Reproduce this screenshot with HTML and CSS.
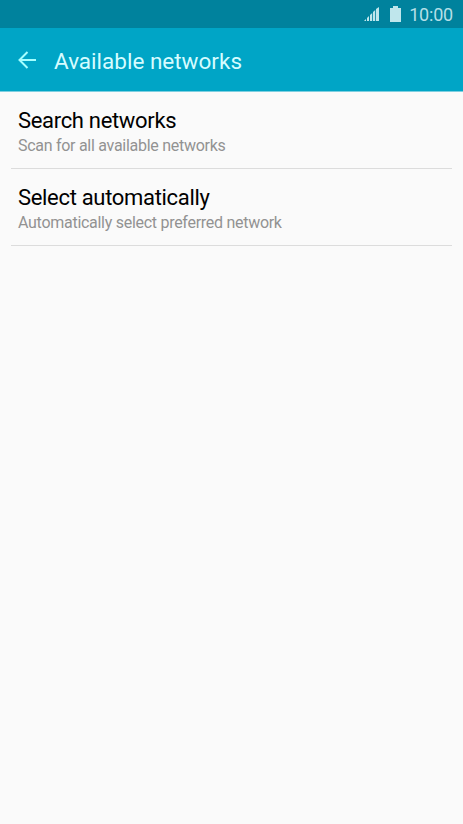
FILE: index.html
```
<!DOCTYPE html>
<html lang="en">

<head>
    <meta charset="UTF-8">
    <meta name="viewport" content="width=device-width, initial-scale=1.0">
    <title>Available networks</title>
    <link rel="stylesheet" href="styles.css">
</head>

<body>
    <div id="status">
        <svg class="signal" width="16" height="16" viewBox="0 0 16 16">
            <path d="M0 15l2-2v2zM3 15v-3l2-2v5zM6 15V9l2.200-2v8zM9 15V6l2.200-2v11zM12 15V3l3-2v14z" />
        </svg>
        <svg class="battery" width="11" height="16" viewBox="0 0 11 16">
            <path d="M3 0h5v2h3v14H0V2h3z" />
        </svg>
        <span class="time">10:00</span>
    </div>
    <div id="header">
        <svg class="back" width="20" height="20" viewBox="0 0 20 20">
            <path d="M19 10H2.500M10.500 2l-8 8 8 8" />
        </svg>
        <h1>Available networks</h1>
    </div>
    <ul id="list">
        <li>
            <h2>Search networks</h2>
            <p>Scan for all available networks</p>
        </li>
        <li>
            <h2>Select automatically</h2>
            <p>Automatically select preferred network</p>
        </li>
    </ul>
</body>

</html>
```
FILE: styles.css
```
* {
    margin: 0;
    padding: 0;
}

body {
    background: #fafafa;
    font-family: Roboto, sans-serif;
}

li {
    list-style: none;
}

#status {
    display: flex;
    height: 28px;
    padding-right: 10px;
    background: #00829d;
    align-items: center;
    justify-content: flex-end;
}

#status svg {
    fill: #bfe6ec;
}

.battery {
    margin: 0 8px 0 10px;
}

.time {
    padding-top: 1px;
    color: #b5dfe7;
    font-size: 18px;
    font-weight: 400;
    letter-spacing: -0.2px;
    line-height: 28px;
}

#header {
    display: flex;
    height: 63px;
    padding-left: 17px;
    background: #00a5c6;
    border-bottom: 1px solid #7dcfe0;
    align-items: center;
}

.back {
    fill: none;
    stroke: #a5ffff;
    stroke-width: 2;
}

h1 {
    margin-left: 17px;
    padding-top: 3px;
    color: #d5fcff;
    font-size: 22.5px;
    font-weight: 400;
}

#list {
    padding: 0 11px;
}

#list li {
    height: 76px;
    padding-left: 7px;
    border-bottom: 1px solid #dcdcdc;
}

h2 {
    padding-top: 14px;
    color: #000;
    font-size: 22px;
    font-weight: 400;
    letter-spacing: -0.32px;
    line-height: 29px;
}

p {
    padding-top: 1px;
    color: #929292;
    font-size: 16px;
    letter-spacing: -0.28px;
    line-height: 20px;
}
```
